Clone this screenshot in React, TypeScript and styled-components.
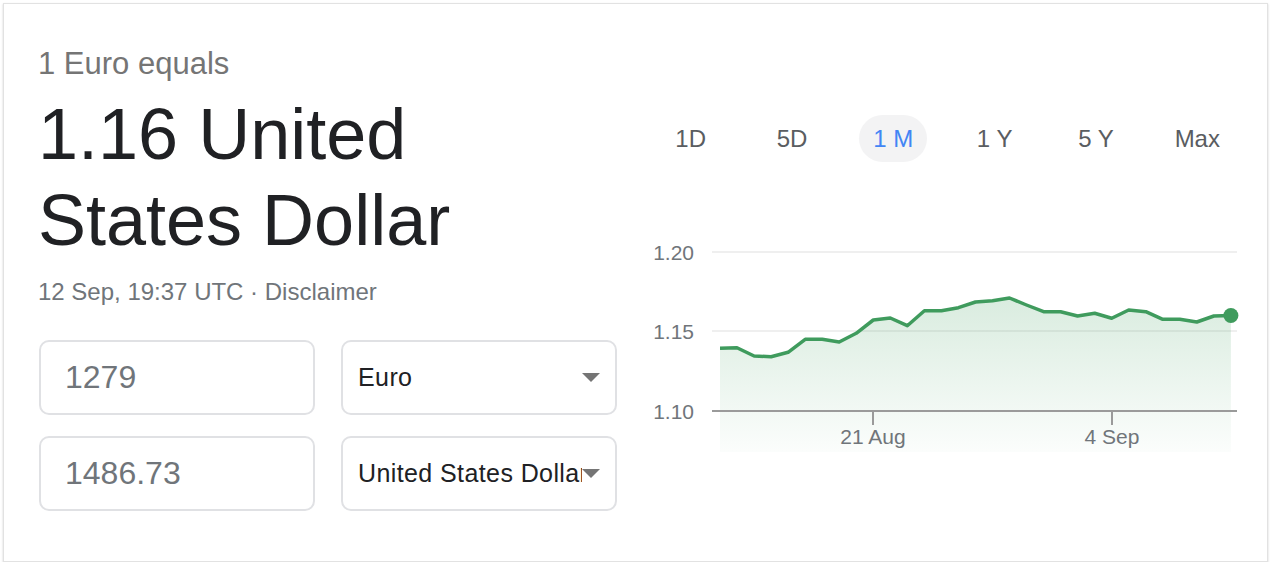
import React from 'react';
import styled, { createGlobalStyle } from 'styled-components';

const GlobalStyle = createGlobalStyle`
  body {
    margin: 0;
    background: #fff;
    font-family: "Liberation Sans", Arial, sans-serif;
  }
`

const Card = styled.div`
  box-sizing: border-box;
  margin: 3px 0 0 3px;
  width: 1265px;
  height: 559px;
  border: 1px solid #e2e2e2;
  box-shadow: 0 1px 2px rgba(0, 0, 0, 0.18);
  display: flex;
  padding: 40px 19px 0 34px;
`

const Summary = styled.div`
  width: 580px;
  flex-shrink: 0;
`

const Lead = styled.div`
  font-size: 31px;
  line-height: 40px;
  color: #757575;
`

const Result = styled.div`
  margin-top: 7px;
  font-size: 72px;
  line-height: 86px;
  color: #202124;
`

const Meta = styled.div`
  margin-top: 13px;
  font-size: 24px;
  line-height: 32px;
  color: #70757a;
`

const Converter = styled.div`
  margin-top: 32px;
  display: grid;
  grid-template-columns: 276px 276px;
  grid-auto-rows: 75px;
  column-gap: 26px;
  row-gap: 21px;
  padding-left: 1px;
`

const Amount = styled.input`
  box-sizing: border-box;
  width: 100%;
  height: 100%;
  margin: 0;
  border: 2px solid #e0e1e4;
  border-radius: 10px;
  padding: 0 0 0 24px;
  font-family: "Liberation Sans", Arial, sans-serif;
  font-size: 32px;
  color: #70757a;
  background: #fff;
  outline: none;
`

const Unit = styled.div`
  box-sizing: border-box;
  height: 100%;
  border: 2px solid #e0e1e4;
  border-radius: 10px;
  display: flex;
  align-items: center;
  padding: 0 15px 0 15px;
`

const UnitName = styled.span`
  flex: 1;
  min-width: 0;
  overflow: hidden;
  white-space: nowrap;
  font-size: 25px;
  letter-spacing: 0.4px;
  color: #202124;
`

const Caret = styled.span`
  flex-shrink: 0;
  width: 0;
  height: 0;
  border-left: 9.5px solid transparent;
  border-right: 9.5px solid transparent;
  border-top: 9px solid #757575;
`

const ChartPanel = styled.div`
  width: 608px;
  margin-left: 22px;
  flex-shrink: 0;
`

const Ranges = styled.div`
  display: flex;
  margin-top: 71px;
`

const RangeCell = styled.div`
  flex: 1;
  display: flex;
  justify-content: center;
`

const Range = styled.div<{ $active?: boolean }>`
  width: 68px;
  height: 47px;
  border-radius: 24px;
  display: flex;
  align-items: center;
  justify-content: center;
  font-size: 24px;
  color: ${(p) => (p.$active ? '#4285f4' : '#5a5d61')};
  background: ${(p) => (p.$active ? '#f3f3f4' : 'transparent')};
  cursor: pointer;
`

const Plot = styled.svg`
  display: block;
  margin-top: 73px;
  font-family: "Liberation Sans", Arial, sans-serif;
`

const RANGES = ['1D', '5D', '1 M', '1 Y', '5 Y', 'Max'];

// pixel heights of the 1 M series, top of plot = 235
const SERIES = [
  348.3, 347.7, 356, 356.7, 352.3, 339.3, 339.3, 342, 333.3, 320, 318, 325.7,
  310.7, 310.7, 307.7, 302, 300.7, 298, 305, 311.7, 311.7, 316, 313.3, 318.3,
  310, 311.7, 319.3, 319.3, 322, 316, 315.5,
];

const Chart = () => {
  const pts = SERIES.map((y, i) => [80 + i * 17.03, y - 235]);
  const line = pts.map(([x, y]) => `${x.toFixed(1)},${y.toFixed(1)}`).join(' ');
  const last = pts[pts.length - 1];
  const area = `80,217 ${line} ${last[0].toFixed(1)},217`;
  return (
    <Plot width="608" height="225" viewBox="0 0 608 225">
      <defs>
        <linearGradient id="fill" x1="0" y1="0" x2="0" y2="1">
          <stop offset="0%" stopColor="#43a060" stopOpacity="0.2" />
          <stop offset="100%" stopColor="#43a060" stopOpacity="0.02" />
        </linearGradient>
      </defs>
      <line x1="72" y1="17" x2="597" y2="17" stroke="#efefef" strokeWidth="2" />
      <line x1="72" y1="96" x2="597" y2="96" stroke="#efefef" strokeWidth="2" />
      <polygon points={area} fill="url(#fill)" />
      <line x1="72" y1="176" x2="597" y2="176" stroke="#9a9a9a" strokeWidth="2" />
      <line x1="233" y1="176" x2="233" y2="190" stroke="#9a9a9a" strokeWidth="2" />
      <line x1="472" y1="176" x2="472" y2="190" stroke="#9a9a9a" strokeWidth="2" />
      <g fontSize="21" fill="#70757a" textAnchor="end">
        <text x="54" y="25">1.20</text>
        <text x="54" y="104">1.15</text>
        <text x="54" y="184">1.10</text>
      </g>
      <g fontSize="21" fill="#70757a" textAnchor="middle">
        <text x="233" y="209">21 Aug</text>
        <text x="472" y="209">4 Sep</text>
      </g>
      <polyline points={line} fill="none" stroke="#3f9b5d" strokeWidth="3.5" strokeLinejoin="round" />
      <circle cx={last[0]} cy={last[1]} r="7.5" fill="#3f9b5d" />
    </Plot>
  );
};

const App = () => (
  <>
    <GlobalStyle />
    <Card>
      <Summary>
        <Lead>1 Euro equals</Lead>
        <Result>1.16 United States Dollar</Result>
        <Meta>12 Sep, 19:37 UTC · Disclaimer</Meta>
        <Converter>
          <Amount defaultValue="1279" />
          <Unit>
            <UnitName>Euro</UnitName>
            <Caret />
          </Unit>
          <Amount defaultValue="1486.73" />
          <Unit>
            <UnitName>United States Dollar</UnitName>
            <Caret />
          </Unit>
        </Converter>
      </Summary>
      <ChartPanel>
        <Ranges>
          {RANGES.map((r) => (
            <RangeCell key={r}>
              <Range $active={r === '1 M'}>{r}</Range>
            </RangeCell>
          ))}
        </Ranges>
        <Chart />
      </ChartPanel>
    </Card>
  </>
);

export default App;
